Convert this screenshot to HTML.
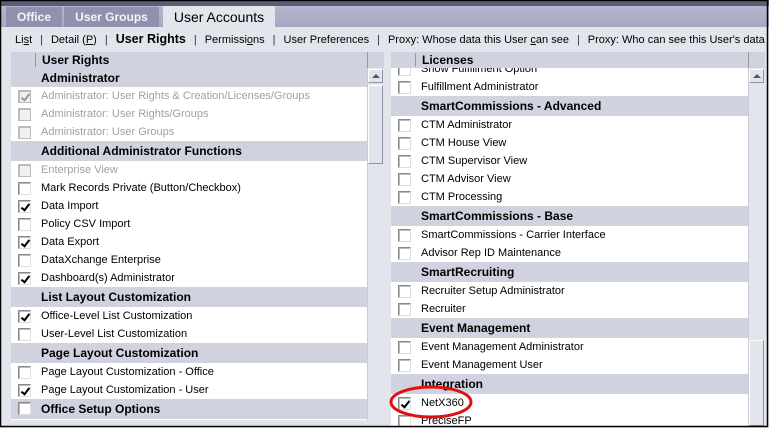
<!DOCTYPE html>
<html><head><style>
*{margin:0;padding:0;box-sizing:border-box}
body{width:769px;height:428px;overflow:hidden;background:#e3e5ed;font-family:"Liberation Sans",Arial,sans-serif;font-size:11px;color:#000;position:relative}
.a{position:absolute}
.top{left:0;top:0;width:769px;height:7px;background:#5a5d78}
.tabbar{left:0;top:6px;width:769px;height:21px;background:linear-gradient(#b4b7cd,#a5a9c2)}
.tab{top:7px;height:20px;background:#8e92ad;color:#f4f5f8;font-weight:bold;font-size:12px;text-align:center;line-height:20px}
.tab.on{background:#e3e5ed;color:#000;font-size:14px;font-weight:normal;top:6px;height:22px;line-height:22px}
.nav{left:15px;top:31px;font-size:11px;white-space:nowrap;line-height:16px}
.nav .s{color:#333;margin:0 8px}
.panel{background:#fff;overflow:hidden}
.hdr{background:#d0d3df;height:16px;font-weight:bold;font-size:12px;line-height:16px}
.row{height:18px;line-height:18px;position:relative;white-space:nowrap;font-size:11px}
.sec{height:20px;line-height:20px;background:#d0d3df;font-weight:bold;font-size:12px;position:relative;white-space:nowrap}
.cb{position:absolute;top:3px;width:13px;height:13px;border:1px solid #888;border-right-color:#ddd;border-bottom-color:#ddd;background:#fff;box-shadow:inset 1px 1px 0 #bbb}
.cb.k::after{content:"";position:absolute;left:4px;top:1px;width:3px;height:7px;border:solid #000;border-width:0 2px 2px 0;transform:rotate(38deg)}
.g{color:#a0a0a0}.cb.d{border-color:#bbb;background:#f0f0f0}.cb.d.k::after{border-color:#999}
.sb{background:#e3e5ed;border-left:1px solid #c8cad6}
.btn{background:#e3e5ed;border:1px solid #8e92ad;border-top-color:#fff;border-left-color:#fff}
</style></head><body>
<div class="a top"></div>
<div class="a tabbar"></div>
<div class="a tab" style="left:6px;width:56px">Office</div>
<div class="a tab" style="left:64px;width:95px">User Groups</div>
<div class="a tab on" style="left:163px;width:112px">User Accounts</div>
<div class="a" style="left:0;top:27px;width:769px;height:24px;background:#e3e5ed"></div>
<div class="a nav">Li<u>s</u>t<span class="s">|</span>Detail (<u>P</u>)<span class="s">|</span><span style="font-weight:bold;font-size:12.5px">User Rights</span><span class="s">|</span>Permissi<u>o</u>ns<span class="s">|</span>User Preferences<span class="s">|</span>Proxy: Whose data this User <u>c</u>an see<span class="s">|</span>Proxy: Who can see this User's data</div>

<!-- left panel -->
<div class="a panel" style="left:11px;top:52px;width:356px;height:368px">
 <div class="hdr" style="padding-left:24px;height:17px;line-height:17px"><span style="border-left:1px solid #999;padding-left:6px">User Rights</span></div>
 <div class="sec" style="height:18px;line-height:18px;padding-left:30px">Administrator</div>
 <div class="row g"><span class="cb d k" style="left:7px"></span><span style="margin-left:30px">Administrator: User Rights &amp; Creation/Licenses/Groups</span></div>
 <div class="row g"><span class="cb d" style="left:7px"></span><span style="margin-left:30px">Administrator: User Rights/Groups</span></div>
 <div class="row g"><span class="cb d" style="left:7px"></span><span style="margin-left:30px">Administrator: User Groups</span></div>
 <div class="sec" style="padding-left:30px">Additional Administrator Functions</div>
 <div class="row g"><span class="cb d" style="left:7px"></span><span style="margin-left:30px">Enterprise View</span></div>
 <div class="row"><span class="cb" style="left:7px"></span><span style="margin-left:30px">Mark Records Private (Button/Checkbox)</span></div>
 <div class="row"><span class="cb k" style="left:7px"></span><span style="margin-left:30px">Data Import</span></div>
 <div class="row"><span class="cb" style="left:7px"></span><span style="margin-left:30px">Policy CSV Import</span></div>
 <div class="row"><span class="cb k" style="left:7px"></span><span style="margin-left:30px">Data Export</span></div>
 <div class="row"><span class="cb" style="left:7px"></span><span style="margin-left:30px">DataXchange Enterprise</span></div>
 <div class="row"><span class="cb k" style="left:7px"></span><span style="margin-left:30px">Dashboard(s) Administrator</span></div>
 <div class="sec" style="padding-left:30px">List Layout Customization</div>
 <div class="row"><span class="cb k" style="left:7px"></span><span style="margin-left:30px">Office-Level List Customization</span></div>
 <div class="row"><span class="cb" style="left:7px"></span><span style="margin-left:30px">User-Level List Customization</span></div>
 <div class="sec" style="padding-left:30px">Page Layout Customization</div>
 <div class="row"><span class="cb" style="left:7px"></span><span style="margin-left:30px">Page Layout Customization - Office</span></div>
 <div class="row"><span class="cb k" style="left:7px"></span><span style="margin-left:30px">Page Layout Customization - User</span></div>
 <div class="sec" style="padding-left:30px"><span class="cb" style="left:7px"></span>Office Setup Options</div>
 <div class="row"><span class="cb" style="left:7px"></span></div>
</div>
<div class="a" style="left:367px;top:52px;width:17px;height:16px;background:#d0d3df;border-left:1px solid #999"></div>
<div class="a sb" style="left:367px;top:68px;width:17px;height:352px"></div>
<div class="a btn" style="left:368px;top:69px;width:15px;height:14px"></div>
<div class="a" style="left:372px;top:74px;width:0;height:0;border:4px solid transparent;border-top:0;border-bottom:4px solid #50546e"></div>
<div class="a btn" style="left:368px;top:85px;width:15px;height:79px"></div>

<!-- right panel -->
<div class="a panel" style="left:391px;top:52px;width:357px;height:374px">
 <div style="height:8px"></div>
 <div class="row"><span class="cb" style="left:7px"></span><span style="margin-left:30px">Show Fulfillment Option</span></div>
 <div class="row"><span class="cb" style="left:7px"></span><span style="margin-left:30px">Fulfillment Administrator</span></div>
 <div class="sec" style="padding-left:30px">SmartCommissions - Advanced</div>
 <div class="row"><span class="cb" style="left:7px"></span><span style="margin-left:30px">CTM Administrator</span></div>
 <div class="row"><span class="cb" style="left:7px"></span><span style="margin-left:30px">CTM House View</span></div>
 <div class="row"><span class="cb" style="left:7px"></span><span style="margin-left:30px">CTM Supervisor View</span></div>
 <div class="row"><span class="cb" style="left:7px"></span><span style="margin-left:30px">CTM Advisor View</span></div>
 <div class="row"><span class="cb" style="left:7px"></span><span style="margin-left:30px">CTM Processing</span></div>
 <div class="sec" style="padding-left:30px">SmartCommissions - Base</div>
 <div class="row"><span class="cb" style="left:7px"></span><span style="margin-left:30px">SmartCommissions - Carrier Interface</span></div>
 <div class="row"><span class="cb" style="left:7px"></span><span style="margin-left:30px">Advisor Rep ID Maintenance</span></div>
 <div class="sec" style="padding-left:30px">SmartRecruiting</div>
 <div class="row"><span class="cb" style="left:7px"></span><span style="margin-left:30px">Recruiter Setup Administrator</span></div>
 <div class="row"><span class="cb" style="left:7px"></span><span style="margin-left:30px">Recruiter</span></div>
 <div class="sec" style="padding-left:30px">Event Management</div>
 <div class="row"><span class="cb" style="left:7px"></span><span style="margin-left:30px">Event Management Administrator</span></div>
 <div class="row"><span class="cb" style="left:7px"></span><span style="margin-left:30px">Event Management User</span></div>
 <div class="sec" style="padding-left:30px">Integration</div>
 <div class="row"><span class="cb k" style="left:7px"></span><span style="margin-left:30px">NetX360</span></div>
 <div class="row"><span class="cb" style="left:7px"></span><span style="margin-left:30px">PreciseFP</span></div>
</div>
<div class="a" style="left:391px;top:52px;width:357px;height:16px;background:#d0d3df;font-weight:bold;font-size:12px;line-height:16px;padding-left:24px"><span style="border-left:1px solid #999;padding-left:6px">Licenses</span></div>
<div class="a" style="left:748px;top:52px;width:17px;height:16px;background:#d0d3df;border-left:1px solid #999"></div>
<div class="a sb" style="left:748px;top:68px;width:17px;height:358px"></div>
<div class="a btn" style="left:749px;top:69px;width:15px;height:14px"></div>
<div class="a" style="left:753px;top:74px;width:0;height:0;border:4px solid transparent;border-top:0;border-bottom:4px solid #50546e"></div>
<div class="a btn" style="left:749px;top:340px;width:15px;height:86px"></div>

<svg class="a" style="left:0;top:0" width="769" height="428">
 <ellipse cx="431" cy="402" rx="40" ry="15" fill="none" stroke="#e01010" stroke-width="3"/>
 <rect x="0.5" y="0.5" width="767" height="426" fill="none" stroke="#000" stroke-width="1.5"/>
</svg>
</body></html>
